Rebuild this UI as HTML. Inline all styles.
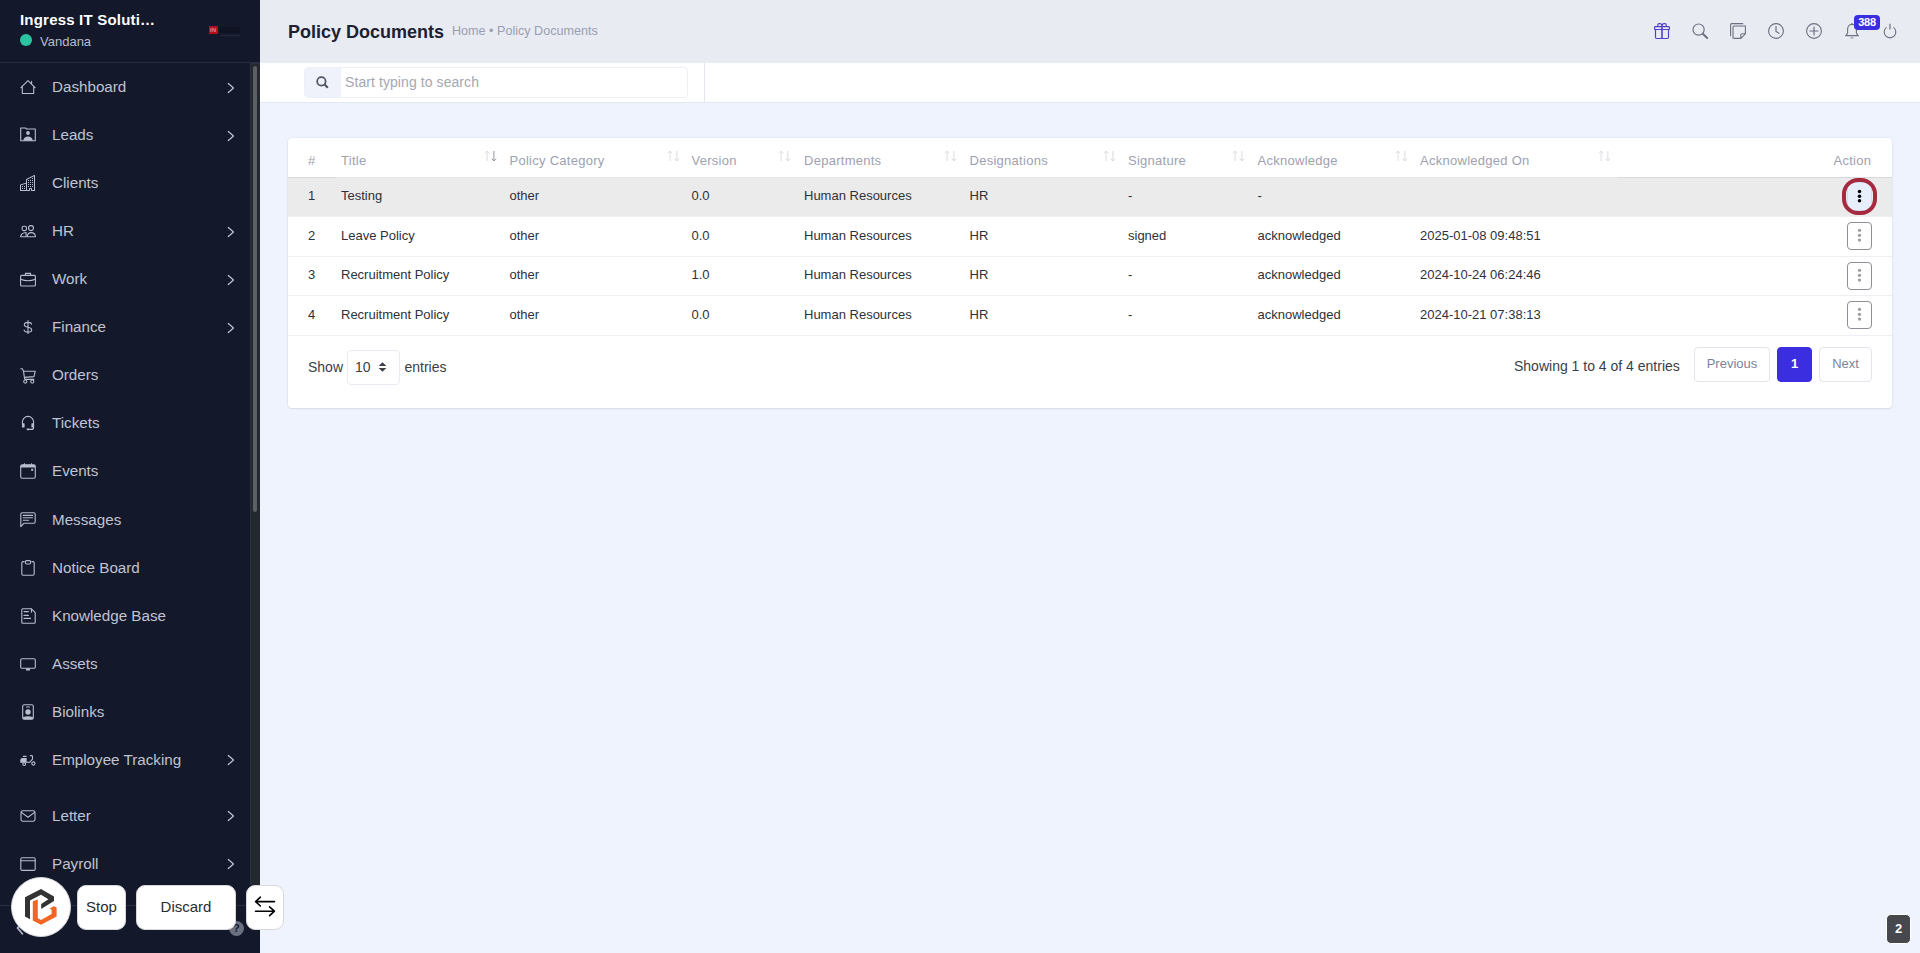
<!DOCTYPE html>
<html><head><meta charset="utf-8">
<style>
*{box-sizing:border-box;margin:0;padding:0}
html,body{width:1920px;height:953px;overflow:hidden}
body{font-family:"Liberation Sans",sans-serif;background:#eff3fd;position:relative;color:#3f4254}
div,svg{position:absolute}
.ic{overflow:visible}
#sb{left:0;top:0;width:260px;height:953px;background:#13192b}
#sbline{left:0;top:62px;width:260px;height:1px;background:#272d3d}
.comp{left:20px;top:11px;font-size:15px;font-weight:bold;letter-spacing:.2px;color:#fff;white-space:nowrap;line-height:17px}
.user{left:40px;top:34px;font-size:13px;color:#b9bdcc;line-height:15px}
.dot{left:20px;top:34px;width:12px;height:12px;border-radius:50%;background:#2bc4a0}
.nt{left:52px;font-size:15.2px;color:#c0c3d1;line-height:17px;white-space:nowrap}
#track{left:250px;top:63px;width:10px;height:822px;background:#24282f;border-left:1px solid #293041;border-top:1px solid #293041}
#thumb{left:253px;top:66px;width:4px;height:446px;background:#5d5f62;border-radius:2px}
#mh{left:260px;top:0;width:1660px;height:63px;background:#e8ebf2}
#title{left:288px;top:22px;font-size:18px;font-weight:bold;color:#1c2033;white-space:nowrap;line-height:20px}
#bc{left:452px;top:24px;font-size:12.6px;color:#9a9eb0;white-space:nowrap;line-height:14px}
#sband{left:260px;top:63px;width:1660px;height:40px;background:#fff;border-bottom:1px solid #e4e7f0}
#sgrp{left:304px;top:67px;width:384px;height:31px;border:1px solid #edf0f6;border-radius:4px;background:#fff}
#sico{left:305px;top:68px;width:36px;height:29px;background:#eff2fa;border-radius:3px 0 0 3px}
#sph{left:345px;top:74px;letter-spacing:.08px;font-size:14px;color:#a5a7b1;white-space:nowrap;line-height:16px}
#vdiv{left:704px;top:63px;width:1px;height:39px;background:#e4e7f0}
#card{left:288px;top:138px;width:1604px;height:270px;background:#fff;border-radius:4px;box-shadow:0 0 2px rgba(40,50,80,.12),0 1px 2px rgba(40,50,80,.08)}
.th{top:153px;font-size:13px;letter-spacing:.27px;color:#9ea1af;white-space:nowrap;line-height:15px}
.srt{width:13px;height:12px;top:150px}
.row{left:288px;width:1604px;height:1px;background:#eef0f3}
.td{font-size:13px;color:#2e313b;white-space:nowrap;line-height:15px}
.abtn{left:1847px;width:25px;height:28px;border:1px solid #8f8f95;border-radius:4px;background:#fff}
.abtn i{position:absolute;left:10px;width:3px;height:3px;border-radius:1px;background:#ababad}
.ft{font-size:14px;color:#3a3d4a;white-space:nowrap;line-height:16px}
.pg{height:35px;border:1px solid #e3e5ec;border-radius:4px;background:#fff;font-size:13px;color:#7e8299;line-height:15px;text-align:center;padding-top:8px}
.tb{background:#fff;border:1px solid #d8d8dc;border-radius:9px;font-size:15px;color:#2a2b30;text-align:center;line-height:17px}
</style></head><body>
<div id="sb">
  <div class="comp">Ingress IT Soluti…</div>
  <div class="dot"></div>
  <div class="user">Vandana</div>
  <div style="left:209px;top:26px;width:9px;height:8px;background:#b01018;border-radius:1px"></div>
  <div style="left:210px;top:27px;font-size:6px;font-weight:bold;color:#f07a80;line-height:6px">IN</div>
  <div style="left:220px;top:27px;width:20px;height:6px;background:#0c0f1a;opacity:.55"></div>
  <div style="left:220px;top:35px;width:20px;height:1px;background:#22273a"></div>
  <div id="sbline"></div>
<svg class="ic" style="left:20px;top:79px;width:16px;height:16px" viewBox="0 0 16 16" ><path fill="none" stroke="#b9bdcd" stroke-width="1.1" stroke-linecap="round" stroke-linejoin="round" d="M2.3 7.6V14.5H13.7V7.6M0.9 8.6L8 1.6L15.1 8.6M11.6 2.4V4.3"/></svg><div class="nt" style="top:78px">Dashboard</div><svg class="ic" style="left:225.5px;top:81.5px;width:10px;height:12px" viewBox="0 0 10 12"><path d="M2.3 1.4L7.5 6L2.3 10.6" fill="none" stroke="#b9bdcd" stroke-width="1.3" stroke-linecap="round" stroke-linejoin="round"/></svg><svg class="ic" style="left:20px;top:127px;width:16px;height:15px" viewBox="0 0 16 15" ><path fill="none" stroke="#b9bdcd" stroke-width="1.1" stroke-linecap="round" stroke-linejoin="round" d="M0.7 1.0H5.5L6.5 2.0H15.3V13.8H0.7Z"/><circle cx="8" cy="6" r="1.9" fill="#b9bdcd"/><path fill="#b9bdcd" d="M3.2 13.8C3.6 10.8 5.6 9.6 8 9.6C10.4 9.6 12.4 10.8 12.8 13.8Z"/></svg><div class="nt" style="top:126px">Leads</div><svg class="ic" style="left:225.5px;top:129.5px;width:10px;height:12px" viewBox="0 0 10 12"><path d="M2.3 1.4L7.5 6L2.3 10.6" fill="none" stroke="#b9bdcd" stroke-width="1.3" stroke-linecap="round" stroke-linejoin="round"/></svg><svg class="ic" style="left:20px;top:175px;width:16px;height:16px" viewBox="0 0 16 16" ><path fill="#b9bdcd" d="M14.763.075A.5.5 0 0 1 15 .5v15a.5.5 0 0 1-.5.5h-3a.5.5 0 0 1-.5-.5V14h-1v1.5a.5.5 0 0 1-.5.5h-9a.5.5 0 0 1-.5-.5V10a.5.5 0 0 1 .342-.474L6 7.64V4.5a.5.5 0 0 1 .276-.447l8-4a.5.5 0 0 1 .487.022ZM6 8.694 1 10.36V15h5V8.694ZM7 15h2v-1.5a.5.5 0 0 1 .5-.5h2a.5.5 0 0 1 .5.5V15h2V1.309l-7 3.5V15Z"/><path fill="#b9bdcd" d="M2 11h1v1H2v-1Zm2 0h1v1H4v-1Zm-2 2h1v1H2v-1Zm2 0h1v1H4v-1Zm4-4h1v1H8V9Zm2 0h1v1h-1V9Zm-2 2h1v1H8v-1Zm2 0h1v1h-1v-1Zm2-2h1v1h-1V9Zm0 2h1v1h-1v-1ZM8 7h1v1H8V7Zm2 0h1v1h-1V7Zm2 0h1v1h-1V7ZM8 5h1v1H8V5Zm2 0h1v1h-1V5Zm2 0h1v1h-1V5Zm0-2h1v1h-1V3Z"/></svg><div class="nt" style="top:174px">Clients</div><svg class="ic" style="left:20px;top:224px;width:16px;height:14px" viewBox="0 0 16 14" ><rect x="2.1" y="2.2" width="4.4" height="4.4" rx="1.6" fill="none" stroke="#b9bdcd" stroke-width="1.1" stroke-linecap="round" stroke-linejoin="round"/><circle cx="11" cy="4.1" r="2.5" fill="none" stroke="#b9bdcd" stroke-width="1.1" stroke-linecap="round" stroke-linejoin="round"/><path fill="none" stroke="#b9bdcd" stroke-width="1.1" stroke-linecap="round" stroke-linejoin="round" d="M6.1 8.5Q1.4 8.9 0.6 12.3Q0.5 12.8 1 12.8H6.1Z"/><path fill="none" stroke="#b9bdcd" stroke-width="1.1" stroke-linecap="round" stroke-linejoin="round" d="M7.1 12.8Q7.5 8.6 11.2 8.6Q14.9 8.6 15.4 12.3Q15.5 12.8 15 12.8Z"/></svg><div class="nt" style="top:222px">HR</div><svg class="ic" style="left:225.5px;top:225.5px;width:10px;height:12px" viewBox="0 0 10 12"><path d="M2.3 1.4L7.5 6L2.3 10.6" fill="none" stroke="#b9bdcd" stroke-width="1.3" stroke-linecap="round" stroke-linejoin="round"/></svg><svg class="ic" style="left:20px;top:272px;width:16px;height:15px" viewBox="0 0 16 15" ><rect x="0.6" y="3.4" width="14.8" height="10.6" rx="1" fill="none" stroke="#b9bdcd" stroke-width="1.1" stroke-linecap="round" stroke-linejoin="round"/><path fill="none" stroke="#b9bdcd" stroke-width="1.1" stroke-linecap="round" stroke-linejoin="round" d="M5.4 3.4V1.4H10.6V3.4M0.6 7.2Q8 10.2 15.4 7.2"/></svg><div class="nt" style="top:270px">Work</div><svg class="ic" style="left:225.5px;top:273.5px;width:10px;height:12px" viewBox="0 0 10 12"><path d="M2.3 1.4L7.5 6L2.3 10.6" fill="none" stroke="#b9bdcd" stroke-width="1.3" stroke-linecap="round" stroke-linejoin="round"/></svg><svg class="ic" style="left:23px;top:319px;width:10px;height:16px" viewBox="0 0 10 16" ><path fill="none" stroke="#b9bdcd" stroke-width="1.1" stroke-linecap="round" stroke-linejoin="round" stroke-width="1.3" d="M5 1.5V14.5M8.6 5.1Q8.2 3.4 5 3.4Q1.3 3.4 1.3 5.8Q1.3 7.6 5 8.3Q8.7 9 8.7 11Q8.7 13.1 5 13.1Q1.6 13.1 1.1 11.1"/></svg><div class="nt" style="top:318px">Finance</div><svg class="ic" style="left:225.5px;top:321.5px;width:10px;height:12px" viewBox="0 0 10 12"><path d="M2.3 1.4L7.5 6L2.3 10.6" fill="none" stroke="#b9bdcd" stroke-width="1.3" stroke-linecap="round" stroke-linejoin="round"/></svg><svg class="ic" style="left:20px;top:368px;width:16px;height:16px" viewBox="0 0 16 16" ><path fill="none" stroke="#b9bdcd" stroke-width="1.1" stroke-linecap="round" stroke-linejoin="round" d="M0.8 0.8H2.3L3.5 3.2H15.2L14 8.6L4.4 9.4L3.5 3.2M4.4 9.4L4.9 11.4H13.8"/><circle cx="5.3" cy="13.6" r="1.6" fill="none" stroke="#b9bdcd" stroke-width="1.1" stroke-linecap="round" stroke-linejoin="round"/><circle cx="12.3" cy="13.6" r="1.6" fill="none" stroke="#b9bdcd" stroke-width="1.1" stroke-linecap="round" stroke-linejoin="round"/></svg><div class="nt" style="top:366px">Orders</div><svg class="ic" style="left:21px;top:415px;width:14px;height:16px" viewBox="0 0 14 16" ><path fill="none" stroke="#b9bdcd" stroke-width="1.1" stroke-linecap="round" stroke-linejoin="round" d="M1.4 9.2V7A5.6 5.6 0 0 1 12.6 7V12.4Q12.6 14.4 10.4 14.4H7"/><rect x="1" y="8.2" width="2.6" height="4.4" rx=".6" fill="#b9bdcd"/><rect x="10.4" y="8.2" width="2.6" height="4.4" rx=".6" fill="#b9bdcd"/><rect x="5.6" y="13.4" width="2.4" height="1.8" rx=".6" fill="#b9bdcd"/></svg><div class="nt" style="top:414px">Tickets</div><svg class="ic" style="left:20px;top:463px;width:16px;height:16px" viewBox="0 0 16 16" ><rect x="0.7" y="1.7" width="14.6" height="13.6" rx="1.6" fill="none" stroke="#b9bdcd" stroke-width="1.1" stroke-linecap="round" stroke-linejoin="round"/><path fill="#b9bdcd" d="M0.7 3.4Q0.7 1.7 2.4 1.7H13.6Q15.3 1.7 15.3 3.4V4.6H0.7Z"/><rect x="4" y="0.3" width="1" height="2" fill="#b9bdcd"/><rect x="11" y="0.3" width="1" height="2" fill="#b9bdcd"/><rect x="11.2" y="5.8" width="2" height="2" fill="#b9bdcd"/></svg><div class="nt" style="top:462px">Events</div><svg class="ic" style="left:20px;top:512px;width:16px;height:16px" viewBox="0 0 16 16" ><path fill="none" stroke="#b9bdcd" stroke-width="1.1" stroke-linecap="round" stroke-linejoin="round" d="M2.2 0.8H13.8Q15.2 0.8 15.2 2.2V9.8Q15.2 11.3 13.8 11.3H3.8L0.8 14.6V2.2Q0.8 0.8 2.2 0.8Z"/><path fill="none" stroke="#b9bdcd" stroke-width="1.1" stroke-linecap="round" stroke-linejoin="round" d="M3.2 3.4H12.6M3.2 5.8H12.6M3.2 8.3H8.6"/></svg><div class="nt" style="top:511px">Messages</div><svg class="ic" style="left:21px;top:560px;width:14px;height:16px" viewBox="0 0 14 16" ><path fill="none" stroke="#b9bdcd" stroke-width="1.1" stroke-linecap="round" stroke-linejoin="round" d="M3.2 1.6H2.2Q0.8 1.6 0.8 3V13.8Q0.8 15.2 2.2 15.2H11.8Q13.2 15.2 13.2 13.8V3Q13.2 1.6 11.8 1.6H10.8"/><rect x="4.4" y="0.6" width="5.2" height="3.4" rx="1.2" fill="none" stroke="#b9bdcd" stroke-width="1.1" stroke-linecap="round" stroke-linejoin="round"/></svg><div class="nt" style="top:559px">Notice Board</div><svg class="ic" style="left:21px;top:608px;width:15px;height:16px" viewBox="0 0 15 16" ><path fill="none" stroke="#b9bdcd" stroke-width="1.1" stroke-linecap="round" stroke-linejoin="round" d="M1.8 0.8H10.4L14.2 4.6V14.2Q14.2 15.2 13.2 15.2H1.8Q0.8 15.2 0.8 14.2V1.8Q0.8 0.8 1.8 0.8Z"/><path fill="none" stroke="#b9bdcd" stroke-width="1.1" stroke-linecap="round" stroke-linejoin="round" d="M3 3.6H7.4M3 7.4H7.4M3 10.4H9.6M10.4 1V4.2"/></svg><div class="nt" style="top:607px">Knowledge Base</div><svg class="ic" style="left:20px;top:658px;width:16px;height:13px" viewBox="0 0 16 13" ><rect x="0.7" y="0.7" width="14.6" height="9.6" rx="1.4" fill="none" stroke="#b9bdcd" stroke-width="1.1" stroke-linecap="round" stroke-linejoin="round"/><path fill="#b9bdcd" d="M6.4 10.3H9.6L10.2 12.6H5.8Z"/></svg><div class="nt" style="top:655px">Assets</div><svg class="ic" style="left:22px;top:704px;width:12px;height:16px" viewBox="0 0 12 16" ><rect x="0.7" y="0.7" width="10.6" height="14.6" rx="1.6" fill="none" stroke="#b9bdcd" stroke-width="1.1" stroke-linecap="round" stroke-linejoin="round"/><rect x="4" y="2.4" width="4" height="1" rx=".5" fill="#b9bdcd"/><circle cx="6" cy="8" r="2.7" fill="#b9bdcd"/><path fill="#b9bdcd" d="M0.9 13.2Q3 12.2 6 12.2Q9 12.2 11.1 13.2V14.2Q11.1 15.3 10 15.3H2Q0.9 15.3 0.9 14.2Z"/></svg><div class="nt" style="top:703px">Biolinks</div><svg class="ic" style="left:20px;top:755px;width:16px;height:11px" viewBox="0 0 16 11" ><rect x="2.8" y="0.7" width="3.8" height="1.3" rx=".5" fill="#b9bdcd"/><path fill="#b9bdcd" d="M0.3 7.8V5.2Q0.3 3.1 2.5 3.1H6.7V7.8Z"/><path fill="none" stroke="#b9bdcd" stroke-width="1.1" stroke-linecap="round" stroke-linejoin="round" d="M6.6 7.3H9.7L12.5 4.2V1.3Q12.5 0.6 11.8 0.6H10.4"/><circle cx="4.2" cy="9.1" r="1.4" fill="none" stroke="#b9bdcd" stroke-width="1.1" stroke-linecap="round" stroke-linejoin="round"/><circle cx="13.4" cy="8.5" r="1.6" fill="none" stroke="#b9bdcd" stroke-width="1.1" stroke-linecap="round" stroke-linejoin="round"/></svg><div class="nt" style="top:751px">Employee Tracking</div><svg class="ic" style="left:225.5px;top:753.5px;width:10px;height:12px" viewBox="0 0 10 12"><path d="M2.3 1.4L7.5 6L2.3 10.6" fill="none" stroke="#b9bdcd" stroke-width="1.3" stroke-linecap="round" stroke-linejoin="round"/></svg><svg class="ic" style="left:20px;top:810px;width:16px;height:12px" viewBox="0 0 16 12" ><rect x="1" y="0.8" width="14" height="10.4" rx="1.6" fill="none" stroke="#b9bdcd" stroke-width="1.1" stroke-linecap="round" stroke-linejoin="round"/><path fill="none" stroke="#b9bdcd" stroke-width="1.1" stroke-linecap="round" stroke-linejoin="round" d="M1.4 2.4L8 7.2L14.6 2.4"/></svg><div class="nt" style="top:807px">Letter</div><svg class="ic" style="left:225.5px;top:809.5px;width:10px;height:12px" viewBox="0 0 10 12"><path d="M2.3 1.4L7.5 6L2.3 10.6" fill="none" stroke="#b9bdcd" stroke-width="1.3" stroke-linecap="round" stroke-linejoin="round"/></svg><svg class="ic" style="left:20px;top:857px;width:16px;height:14px" viewBox="0 0 16 14" ><rect x="0.8" y="0.8" width="14.4" height="12.6" rx="1.4" fill="none" stroke="#b9bdcd" stroke-width="1.1" stroke-linecap="round" stroke-linejoin="round"/><path fill="none" stroke="#b9bdcd" stroke-width="1.1" stroke-linecap="round" stroke-linejoin="round" d="M0.8 3.8H15.2"/></svg><div class="nt" style="top:855px">Payroll</div><svg class="ic" style="left:225.5px;top:857.5px;width:10px;height:12px" viewBox="0 0 10 12"><path d="M2.3 1.4L7.5 6L2.3 10.6" fill="none" stroke="#b9bdcd" stroke-width="1.3" stroke-linecap="round" stroke-linejoin="round"/></svg>
  <div id="track"></div><div id="thumb"></div>
  <div style="left:0;top:905px;width:250px;height:1px;background:#2a3042"></div>
  <svg class="ic" style="left:14px;top:919px;width:12px;height:18px" viewBox="0 0 12 18"><path d="M8.5 3L3.5 9L8.5 15" fill="none" stroke="#b9bdcd" stroke-width="1.6" stroke-linecap="round"/></svg>
  <div style="left:229px;top:921px;width:15px;height:15px;border-radius:50%;background:#6b7080"></div>
  <div style="left:233px;top:922px;font-size:11px;font-weight:bold;color:#141a2c;line-height:13px">?</div>
</div>
<div id="mh"></div>
<div id="title">Policy Documents</div>
<div id="bc">Home • Policy Documents</div>
<!-- header icons -->
<svg class="ic" style="left:1654px;top:23px;width:16px;height:16px" viewBox="0 0 16 16"><g fill="none" stroke="#5340c8" stroke-width="1.15" stroke-linejoin="round"><rect x="0.6" y="3.6" width="14.8" height="2.9" rx=".6"/><path d="M1.5 6.5V14.6Q1.5 15.5 2.5 15.5H13.5Q14.5 15.5 14.5 14.6V6.5"/><path d="M3.8 3.6V1.8Q3.8 0.6 5 0.6H6.2Q7.8 0.6 8 3.6M12.2 3.6V1.8Q12.2 0.6 11 0.6H9.8Q8.2 0.6 8 3.6"/></g><path d="M8 3.4V15.6" stroke="#5340c8" stroke-width="1.6"/></svg>
<svg class="ic" style="left:1692px;top:23px;width:17px;height:16px" viewBox="0 0 17 16"><circle cx="6.6" cy="6.6" r="5.6" fill="none" stroke="#6c7080" stroke-width="1.2"/><path d="M10.8 10.8L15.2 15" stroke="#6c7080" stroke-width="2" stroke-linecap="round"/></svg>
<svg class="ic" style="left:1730px;top:23px;width:16px;height:16px" viewBox="0 0 16 16"><path fill="none" stroke="#6c7080" stroke-width="1.1" d="M0.6 13.2V1.8Q0.6 0.6 1.8 0.6H13.2M3 15.4V4.2Q3 3 4.2 3H15.4V10.8L10.8 15.4H4.2Q3 15.4 3 14.2M15.4 10.8H12Q10.8 10.8 10.8 12V15.4"/></svg>
<svg class="ic" style="left:1768px;top:23px;width:16px;height:16px" viewBox="0 0 16 16"><circle cx="8" cy="8" r="7.4" fill="none" stroke="#6c7080" stroke-width="1.1"/><path d="M8 3.6V8.4L11 10.2" fill="none" stroke="#6c7080" stroke-width="1.2" stroke-linecap="round"/></svg>
<svg class="ic" style="left:1806px;top:23px;width:16px;height:16px" viewBox="0 0 16 16"><circle cx="8" cy="8" r="7.4" fill="none" stroke="#6c7080" stroke-width="1.1"/><path d="M8 4V12M4 8H12" stroke="#6c7080" stroke-width="1.2" stroke-linecap="round"/></svg>
<svg class="ic" style="left:1845px;top:23px;width:14px;height:16px" viewBox="0 0 14 16"><path fill="none" stroke="#6c7080" stroke-width="1.1" d="M7 1.4C3.8 1.4 2.6 4 2.6 6.4V10L0.8 12.6H13.2L11.4 10V6.4C11.4 4 10.2 1.4 7 1.4Z"/><path d="M5.2 14.4Q7 16.4 8.8 14.4Z" fill="#6c7080"/><rect x="6.4" y="0" width="1.2" height="1.6" fill="#6c7080"/></svg>
<div style="left:1854px;top:15px;width:26px;height:15px;background:#3a2ee0;border-radius:4px;color:#fff;font-size:11px;font-weight:bold;text-align:center;line-height:15px;letter-spacing:-.3px">388</div>
<svg class="ic" style="left:1883px;top:23px;width:14px;height:15px" viewBox="0 0 14 15"><path d="M3.6 4.4A5.8 5.8 0 1 0 10.4 4.4" fill="none" stroke="#6c7080" stroke-width="1.1"/><path d="M7 0.8V6.6" stroke="#6c7080" stroke-width="1.2"/></svg>
<!-- search band -->
<div id="sband"></div>
<div id="vdiv"></div>
<div id="sgrp"></div><div id="sico"></div>
<svg class="ic" style="left:316px;top:76px;width:13px;height:13px" viewBox="0 0 13 13"><circle cx="5.4" cy="5.4" r="4.2" fill="none" stroke="#4f5464" stroke-width="1.75"/><path d="M8.6 8.6L11.8 11.8" stroke="#4f5464" stroke-width="2.1" stroke-linecap="butt"/></svg>
<div id="sph">Start typing to search</div>
<!-- card -->
<div id="card"></div>
<div class="th" style="left:308px">#</div><div class="th" style="left:341px">Title</div><div class="th" style="left:509.5px">Policy Category</div><div class="th" style="left:691.5px">Version</div><div class="th" style="left:804px">Departments</div><div class="th" style="left:969.5px">Designations</div><div class="th" style="left:1128px">Signature</div><div class="th" style="left:1257.5px">Acknowledge</div><div class="th" style="left:1420px">Acknowledged On</div><div class="th" style="left:1833.5px">Action</div><svg class="srt" style="left:484px" viewBox="0 0 12 12"><path d="M2.6 11V1M0.4 3.4L2.6 1L4.8 3.4" fill="none" stroke="#dcdde2" stroke-width="1"/><path d="M9.4 1V11M7.2 8.6L9.4 11L11.6 8.6" fill="none" stroke="#94969e" stroke-width="1"/></svg><svg class="srt" style="left:667px" viewBox="0 0 12 12"><path d="M2.6 11V1M0.4 3.4L2.6 1L4.8 3.4" fill="none" stroke="#dcdde2" stroke-width="1"/><path d="M9.4 1V11M7.2 8.6L9.4 11L11.6 8.6" fill="none" stroke="#d9dadf" stroke-width="1"/></svg><svg class="srt" style="left:778px" viewBox="0 0 12 12"><path d="M2.6 11V1M0.4 3.4L2.6 1L4.8 3.4" fill="none" stroke="#dcdde2" stroke-width="1"/><path d="M9.4 1V11M7.2 8.6L9.4 11L11.6 8.6" fill="none" stroke="#d9dadf" stroke-width="1"/></svg><svg class="srt" style="left:943.5px" viewBox="0 0 12 12"><path d="M2.6 11V1M0.4 3.4L2.6 1L4.8 3.4" fill="none" stroke="#dcdde2" stroke-width="1"/><path d="M9.4 1V11M7.2 8.6L9.4 11L11.6 8.6" fill="none" stroke="#d9dadf" stroke-width="1"/></svg><svg class="srt" style="left:1103px" viewBox="0 0 12 12"><path d="M2.6 11V1M0.4 3.4L2.6 1L4.8 3.4" fill="none" stroke="#dcdde2" stroke-width="1"/><path d="M9.4 1V11M7.2 8.6L9.4 11L11.6 8.6" fill="none" stroke="#d9dadf" stroke-width="1"/></svg><svg class="srt" style="left:1232px" viewBox="0 0 12 12"><path d="M2.6 11V1M0.4 3.4L2.6 1L4.8 3.4" fill="none" stroke="#dcdde2" stroke-width="1"/><path d="M9.4 1V11M7.2 8.6L9.4 11L11.6 8.6" fill="none" stroke="#d9dadf" stroke-width="1"/></svg><svg class="srt" style="left:1395px" viewBox="0 0 12 12"><path d="M2.6 11V1M0.4 3.4L2.6 1L4.8 3.4" fill="none" stroke="#dcdde2" stroke-width="1"/><path d="M9.4 1V11M7.2 8.6L9.4 11L11.6 8.6" fill="none" stroke="#d9dadf" stroke-width="1"/></svg><svg class="srt" style="left:1597.5px" viewBox="0 0 12 12"><path d="M2.6 11V1M0.4 3.4L2.6 1L4.8 3.4" fill="none" stroke="#dcdde2" stroke-width="1"/><path d="M9.4 1V11M7.2 8.6L9.4 11L11.6 8.6" fill="none" stroke="#d9dadf" stroke-width="1"/></svg><div style="left:288px;top:177px;width:1604px;height:39px;background:#ebebeb"></div><div class="row" style="top:216px"></div><div class="row" style="top:256px"></div><div class="row" style="top:295px"></div><div class="row" style="top:335px"></div><div class="row" style="top:177px;background:#e6e7ea"></div><div style="left:288px;top:177px;width:48px;height:1px;background:#d9d9dc"></div><div style="left:1618px;top:177px;width:274px;height:1px;background:#d9d9dc"></div><div class="td" style="left:308px;top:188px">1</div><div class="td" style="left:341px;top:188px">Testing</div><div class="td" style="left:509.5px;top:188px">other</div><div class="td" style="left:691.5px;top:188px">0.0</div><div class="td" style="left:804px;top:188px">Human Resources</div><div class="td" style="left:969.5px;top:188px">HR</div><div class="td" style="left:1128px;top:188px">-</div><div class="td" style="left:1257.5px;top:188px">-</div><div class="td" style="left:308px;top:228px">2</div><div class="td" style="left:341px;top:228px">Leave Policy</div><div class="td" style="left:509.5px;top:228px">other</div><div class="td" style="left:691.5px;top:228px">0.0</div><div class="td" style="left:804px;top:228px">Human Resources</div><div class="td" style="left:969.5px;top:228px">HR</div><div class="td" style="left:1128px;top:228px">signed</div><div class="td" style="left:1257.5px;top:228px">acknowledged</div><div class="td" style="left:1420px;top:228px">2025-01-08 09:48:51</div><div class="td" style="left:308px;top:267px">3</div><div class="td" style="left:341px;top:267px">Recruitment Policy</div><div class="td" style="left:509.5px;top:267px">other</div><div class="td" style="left:691.5px;top:267px">1.0</div><div class="td" style="left:804px;top:267px">Human Resources</div><div class="td" style="left:969.5px;top:267px">HR</div><div class="td" style="left:1128px;top:267px">-</div><div class="td" style="left:1257.5px;top:267px">acknowledged</div><div class="td" style="left:1420px;top:267px">2024-10-24 06:24:46</div><div class="td" style="left:308px;top:307px">4</div><div class="td" style="left:341px;top:307px">Recruitment Policy</div><div class="td" style="left:509.5px;top:307px">other</div><div class="td" style="left:691.5px;top:307px">0.0</div><div class="td" style="left:804px;top:307px">Human Resources</div><div class="td" style="left:969.5px;top:307px">HR</div><div class="td" style="left:1128px;top:307px">-</div><div class="td" style="left:1257.5px;top:307px">acknowledged</div><div class="td" style="left:1420px;top:307px">2024-10-21 07:38:13</div><div class="abtn" style="top:182px;height:29px;border-color:#d3dcf0;background:#e7effc"></div><svg class="ic" style="left:1847px;top:182px;width:25px;height:29px" viewBox="0 0 25 29"><circle cx="12.5" cy="9.5" r="1.75" fill="#000"/><circle cx="12.5" cy="14.3" r="1.75" fill="#000"/><circle cx="12.5" cy="18.8" r="1.75" fill="#000"/></svg><div style="left:1842px;top:178px;width:35px;height:36.5px;border:4px solid #a52a40;border-radius:16px"></div><div class="abtn" style="top:222px"></div><svg class="ic" style="left:1847px;top:222px;width:25px;height:28px" viewBox="0 0 25 28"><circle cx="12.5" cy="8.3" r="1.65" fill="#9d9da1"/><circle cx="12.5" cy="13.3" r="1.65" fill="#9d9da1"/><circle cx="12.5" cy="18.1" r="1.65" fill="#9d9da1"/></svg><div class="abtn" style="top:262px"></div><svg class="ic" style="left:1847px;top:262px;width:25px;height:28px" viewBox="0 0 25 28"><circle cx="12.5" cy="8.3" r="1.65" fill="#9d9da1"/><circle cx="12.5" cy="13.3" r="1.65" fill="#9d9da1"/><circle cx="12.5" cy="18.1" r="1.65" fill="#9d9da1"/></svg><div class="abtn" style="top:301px"></div><svg class="ic" style="left:1847px;top:301px;width:25px;height:28px" viewBox="0 0 25 28"><circle cx="12.5" cy="8.3" r="1.65" fill="#9d9da1"/><circle cx="12.5" cy="13.3" r="1.65" fill="#9d9da1"/><circle cx="12.5" cy="18.1" r="1.65" fill="#9d9da1"/></svg><div class="ft" style="left:308px;top:358.5px">Show</div><div style="left:347px;top:350px;width:52.5px;height:35px;border:1px solid #e9ebf2;border-radius:4px;background:#fff"></div><div class="ft" style="left:355px;top:359px;color:#3a3d4a">10</div><svg class="ic" style="left:378px;top:362px;width:9px;height:10px" viewBox="0 0 9 10"><path d="M4.5 0.3L8.4 4H0.6ZM4.5 9.7L8.4 6H0.6Z" fill="#3f424c"/></svg><div class="ft" style="left:404.5px;top:358.5px">entries</div><div class="ft" style="left:1514px;top:358px">Showing 1 to 4 of 4 entries</div><div class="pg" style="left:1694px;top:347px;width:76px">Previous</div><div class="pg" style="left:1777px;top:347px;width:35px;background:#3a2ee0;border-color:#3a2ee0;color:#fff;font-weight:bold">1</div><div class="pg" style="left:1819px;top:347px;width:53px">Next</div>
<!-- floating toolbar -->
<div style="left:11px;top:877px;width:60px;height:60px;border-radius:50%;background:#fff;border:1px solid #d6d6da"></div>
<svg class="ic" style="left:20px;top:886px;width:42px;height:42px" viewBox="0 0 42 42"><path fill="#333333" d="M5 11.2L21 3L34 10.6V15L21.2 23V18L28.4 13.2L21 8.8L10 14.4V33.2L5 30.4Z"/><path fill="#f26522" d="M12.8 15.2L17.8 13.4V32.2L21 34L31.6 28V23.8L29.6 22.4L34 20.2L36.6 21.4V30.6L21 38.8L12.8 34.6Z"/></svg>
<div class="tb" style="left:77px;top:885px;width:49px;height:45px;padding-top:12px">Stop</div>
<div class="tb" style="left:136px;top:885px;width:100px;height:45px;padding-top:12px">Discard</div>
<div class="tb" style="left:246px;top:885px;width:38px;height:45px"></div>
<svg class="ic" style="left:254px;top:896px;width:22px;height:22px" viewBox="0 0 22 22"><path d="M20.5 5.6H2M6.4 1.2L1.6 5.6L6.4 10M1.5 15.2H20M15.6 10.8L20.4 15.2L15.6 19.6" fill="none" stroke="#000" stroke-width="1.6" stroke-linecap="round" stroke-linejoin="round"/></svg>
<div style="left:1886px;top:914px;width:25px;height:30px;border:1px solid #fff;border-radius:5px;background:#46484e;color:#fff;font-size:13px;font-weight:bold;text-align:center;line-height:28px">2</div>
</body></html>
